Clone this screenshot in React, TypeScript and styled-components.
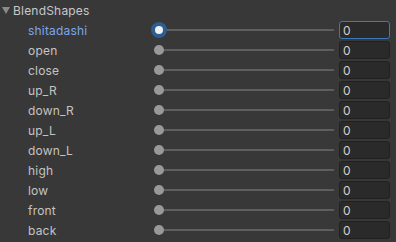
import styled, { createGlobalStyle } from 'styled-components';

const SHAPES = [
  'shitadashi',
  'open',
  'close',
  'up_R',
  'down_R',
  'up_L',
  'down_L',
  'high',
  'low',
  'front',
  'back',
];

const Global = createGlobalStyle`
  html, body {
    margin: 0;
    background: #383838;
  }
  body {
    font-family: Inter, "Noto Sans", sans-serif;
    font-size: 12px;
    letter-spacing: 0.2px;
    color: #c4c4c4;
  }
`;

export default function App() {
  return (
    <>
      <Global />
      <Panel>
        <Header>
          <Arrow>
            <svg width="8" height="7" viewBox="0 0 8 7">
              <path d="M0 0 H8 L4 7 Z" fill="#8a8a8a" />
            </svg>
          </Arrow>
          BlendShapes
        </Header>
        {SHAPES.map((name, i) => (
          <Row key={name}>
            <Label $active={i === 0}>{name}</Label>
            <Slider>
              <Track />
              <Handle $active={i === 0} />
            </Slider>
            <Field $active={i === 0}>0</Field>
          </Row>
        ))}
      </Panel>
    </>
  );
}

const Panel = styled.div`
  display: flex;
  flex-direction: column;
`;

const Header = styled.div`
  height: 20px;
  display: flex;
  align-items: center;
  padding-left: 2px;
  gap: 2px;
  color: #c8c8c8;
`;

const Arrow = styled.span`
  display: flex;
  width: 9px;
  align-items: center;
`;

const Row = styled.div`
  height: 20px;
  display: flex;
  align-items: center;
  padding-right: 6px;
`;

const Label = styled.div<{ $active: boolean }>`
  width: 123px;
  padding-left: 28px;
  color: ${(p) => (p.$active ? '#7ca6ea' : '#c4c4c4')};
`;

const Slider = styled.div`
  position: relative;
  flex: 1;
  height: 18px;
  display: flex;
  align-items: center;
`;

const Track = styled.div`
  margin-left: 8px;
  flex: 1;
  height: 2px;
  background: #5e5e5e;
`;

const Handle = styled.div<{ $active: boolean }>`
  position: absolute;
  left: ${(p) => (p.$active ? '0' : '3px')};
  top: 50%;
  transform: translateY(-50%);
  width: ${(p) => (p.$active ? '8px' : '10px')};
  height: ${(p) => (p.$active ? '8px' : '10px')};
  border-radius: 50%;
  background: ${(p) => (p.$active ? '#f0f0f0' : '#999999')};
  border: ${(p) => (p.$active ? '4px solid #2c5d93' : 'none')};
`;

const Field = styled.div<{ $active: boolean }>`
  margin-left: 5px;
  width: 51px;
  height: 18px;
  box-sizing: border-box;
  display: flex;
  align-items: center;
  padding-left: 3px;
  background: #2a2a2a;
  border: 1px solid ${(p) => (p.$active ? '#3a79bb' : '#212121')};
  border-radius: 3px;
  color: #d2d2d2;
`;
